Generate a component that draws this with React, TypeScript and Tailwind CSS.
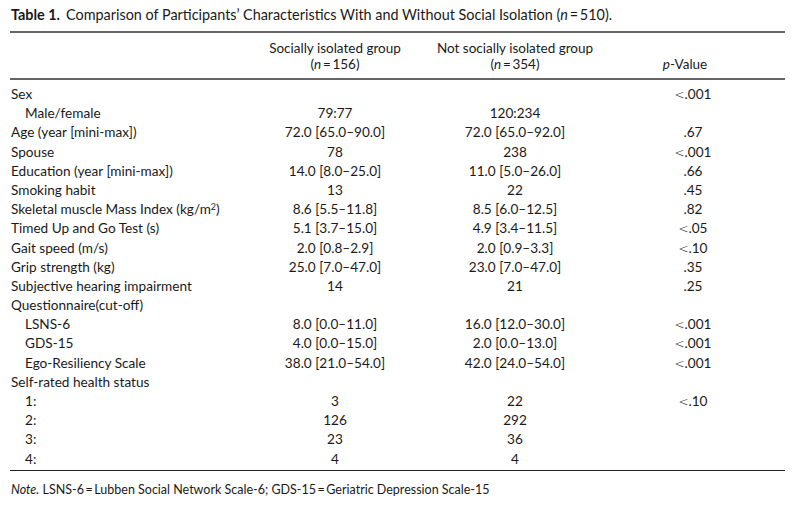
import React from 'react';

type Row = {
  label: string;
  indent?: boolean;
  a?: string;
  b?: string;
  p?: string;
  sup?: boolean;
};

const rows: Row[] = [
  { label: 'Sex', p: '<.001' },
  { label: 'Male/female', indent: true, a: '79:77', b: '120:234' },
  { label: 'Age (year [mini-max])', a: '72.0 [65.0–90.0]', b: '72.0 [65.0–92.0]', p: '.67' },
  { label: 'Spouse', a: '78', b: '238', p: '<.001' },
  { label: 'Education (year [mini-max])', a: '14.0 [8.0–25.0]', b: '11.0 [5.0–26.0]', p: '.66' },
  { label: 'Smoking habit', a: '13', b: '22', p: '.45' },
  { label: 'Skeletal muscle Mass Index (kg/m', sup: true, a: '8.6 [5.5–11.8]', b: '8.5 [6.0–12.5]', p: '.82' },
  { label: 'Timed Up and Go Test (s)', a: '5.1 [3.7–15.0]', b: '4.9 [3.4–11.5]', p: '<.05' },
  { label: 'Gait speed (m/s)', a: '2.0 [0.8–2.9]', b: '2.0 [0.9–3.3]', p: '<.10' },
  { label: 'Grip strength (kg)', a: '25.0 [7.0–47.0]', b: '23.0 [7.0–47.0]', p: '.35' },
  { label: 'Subjective hearing impairment', a: '14', b: '21', p: '.25' },
  { label: 'Questionnaire(cut-off)' },
  { label: 'LSNS-6', indent: true, a: '8.0 [0.0–11.0]', b: '16.0 [12.0–30.0]', p: '<.001' },
  { label: 'GDS-15', indent: true, a: '4.0 [0.0–15.0]', b: '2.0 [0.0–13.0]', p: '<.001' },
  { label: 'Ego-Resiliency Scale', indent: true, a: '38.0 [21.0–54.0]', b: '42.0 [24.0–54.0]', p: '<.001' },
  { label: 'Self-rated health status' },
  { label: '1:', indent: true, a: '3', b: '22', p: '<.10' },
  { label: '2:', indent: true, a: '126', b: '292' },
  { label: '3:', indent: true, a: '23', b: '36' },
  { label: '4:', indent: true, a: '4', b: '4' },
];

const cols = 'grid grid-cols-[240px_170px_190px_166px]';

// p values: the "<" sign is a wide maths glyph in the print layout
const PValue = ({ v }: { v?: string }) => {
  if (!v) return null;
  if (v.startsWith('<')) {
    return (
      <>
        <span className="font-['DejaVu_Sans'] text-[12px] font-light leading-none">&lt;</span>
        {v.slice(1)}
      </>
    );
  }
  return <>{v}</>;
};

export default function App() {
  return (
    <div
      className="w-[795px] h-[507px] bg-white text-[#1a1a1a] pl-[10px] pt-[5px]"
      style={{ fontFamily: 'Lato, "Open Sans", sans-serif' }}
    >
      {/* Caption */}
      <div className="pl-[1px] text-[14.4px] leading-[19px] h-[26px]">
        <span className="font-bold">Table 1.</span>
        <span className="ml-[6px]">
          Comparison of Participants’ Characteristics With and Without Social Isolation (<i>n</i>{'\u2009=\u2009'}510).
        </span>
      </div>

      <div className="w-[775px]">
        {/* Header */}
        <div className={`${cols} border-t-2 border-b-2 border-[#666] pt-[7px] pb-[6px] text-[13.5px] leading-[16px]`}>
          <div />
          <div className="text-center">
            Socially isolated group
            <br />(<i>n</i>{'\u2009=\u2009'}156)
          </div>
          <div className="text-center">
            Not socially isolated group
            <br />(<i>n</i>{'\u2009=\u2009'}354)
          </div>
          <div className="flex items-end justify-center pr-[16px]">
            <span>
              <i>p</i>-Value
            </span>
          </div>
        </div>

        {/* Body */}
        <div className="border-b border-[#222] pt-[5px] pb-[1px] text-[13.6px] leading-[19.2px]">
          {rows.map((r, i) => (
            <div key={i} className={`${cols} h-[19.2px]`}>
              <div className={r.indent ? 'pl-[15px]' : 'pl-[1px]'}>
                {r.label}
                {r.sup && (
                  <>
                    <sup className="text-[9px] leading-none">2</sup>)
                  </>
                )}
              </div>
              <div className="text-center">{r.a}</div>
              <div className="text-center">{r.b}</div>
              <div className="text-center">
                <PValue v={r.p} />
              </div>
            </div>
          ))}
        </div>

        {/* Note */}
        <div className="mt-[11px] pl-[1px] text-[12.5px] leading-[16px]">
          <i>Note.</i> LSNS-6{'\u2009=\u2009'}Lubben Social Network Scale-6; GDS-15{'\u2009=\u2009'}Geriatric Depression Scale-15
        </div>
      </div>
    </div>
  );
}
